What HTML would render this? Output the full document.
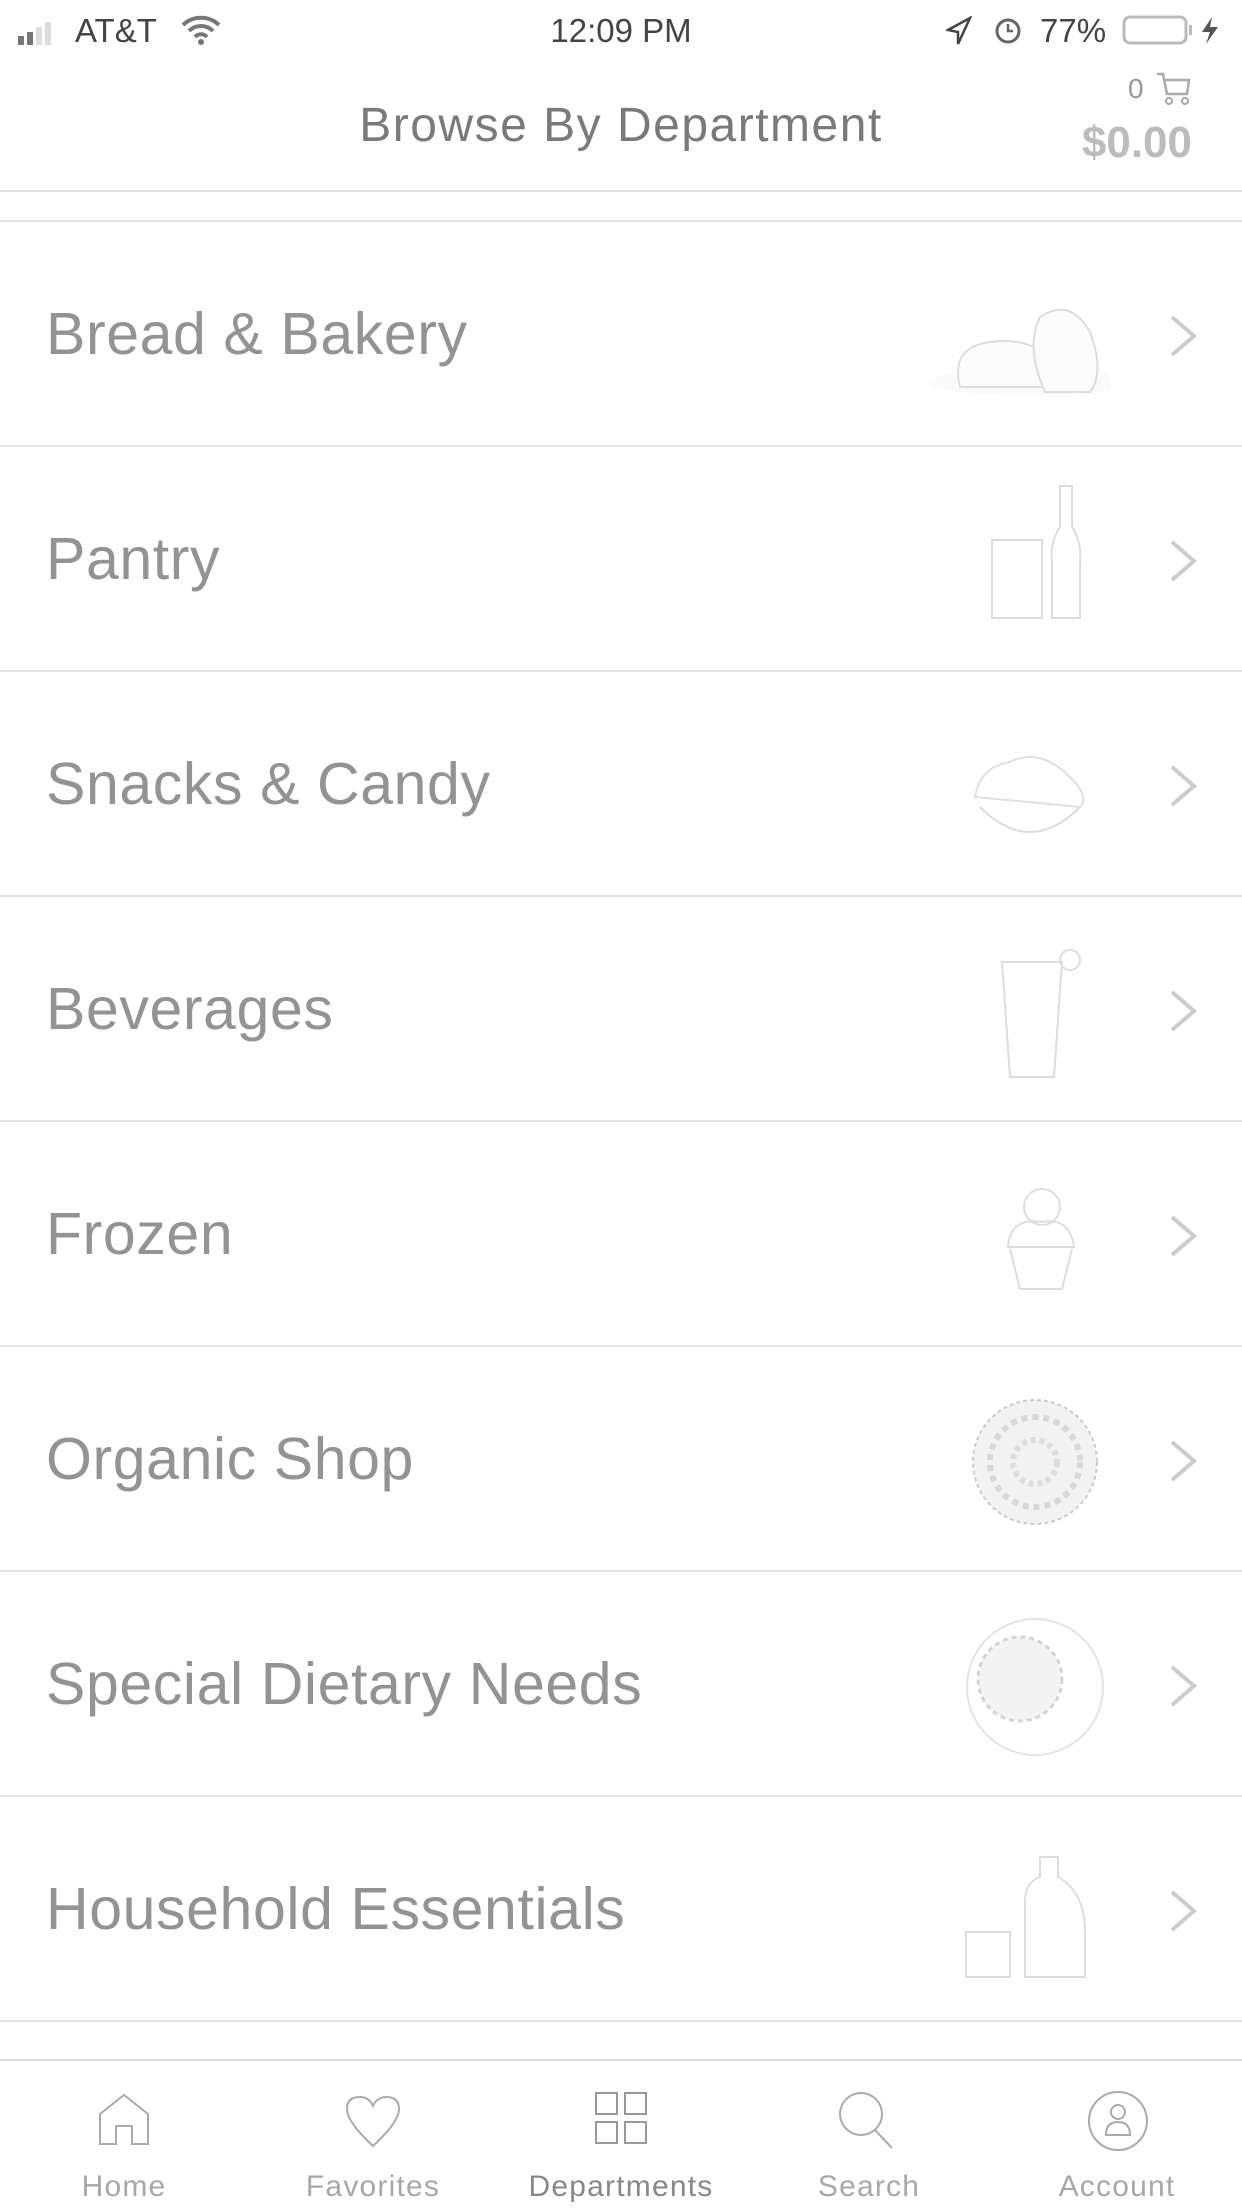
<!DOCTYPE html>
<html><head><meta charset="utf-8"><style>
*{margin:0;padding:0;box-sizing:border-box}
body{width:1242px;height:2208px;background:#fff;font-family:"Liberation Sans",sans-serif;position:relative;overflow:hidden}
.abs{position:absolute}
.row{position:absolute;left:0;width:1242px;height:225px;border-bottom:2px solid #e4e4e4}
.row .t{position:absolute;left:46px;top:0;line-height:225px;font-size:59px;color:#939393;letter-spacing:0.6px}
.row svg.ch{position:absolute;left:1168px;top:91px}
.row svg.im{position:absolute;left:930px;top:35px}
.tab{position:absolute;top:2060px;width:248px;text-align:center}
.tab .l{position:absolute;top:110px;width:100%;font-size:30px;color:#a8a8a8;letter-spacing:1.2px}
</style></head><body>
<div class="abs" style="left:18px;top:22px">
<svg width="48" height="24"><rect x="0" y="14" width="6" height="9" fill="#777"/><rect x="9" y="10" width="6" height="13" fill="#777"/><rect x="18" y="5" width="6" height="18" fill="#ddd"/><rect x="27" y="0" width="6" height="23" fill="#ddd"/></svg></div>
<div class="abs" style="left:75px;top:12px;font-size:33px;color:#444">AT&amp;T</div>
<svg class="abs" style="left:180px;top:14px" width="42" height="32" viewBox="0 0 42 32"><path d="M3 11 A26 26 0 0 1 39 11" stroke="#777" stroke-width="4" fill="none"/><path d="M9 17 A17 17 0 0 1 33 17" stroke="#777" stroke-width="4" fill="none"/><path d="M15 23 A8 8 0 0 1 27 23" stroke="#777" stroke-width="4" fill="none"/><circle cx="21" cy="28" r="3" fill="#777"/></svg>
<div class="abs" style="left:0;width:1242px;text-align:center;top:12px;font-size:33px;color:#444">12:09 PM</div>
<svg class="abs" style="left:946px;top:16px" width="26" height="30"><path d="M24 2 L2 14 L12 16 L12 28 Z" stroke="#444" stroke-width="2.5" fill="none"/></svg>
<svg class="abs" style="left:993px;top:14px" width="30" height="32"><circle cx="15" cy="17" r="11" stroke="#666" stroke-width="3" fill="none"/><path d="M15 10 V17 H20" stroke="#666" stroke-width="2.5" fill="none"/></svg>
<div class="abs" style="left:1040px;top:12px;font-size:33px;color:#444">77%</div>
<svg class="abs" style="left:1122px;top:14px" width="100" height="32"><rect x="2" y="3" width="62" height="26" rx="6" stroke="#bbb" stroke-width="3" fill="none"/><rect x="67" y="11" width="3" height="10" fill="#bbb"/><path d="M90 3 L80 18 H88 L84 30 L96 13 H88 Z" fill="#555"/></svg>
<div class="abs" style="left:0;width:1242px;text-align:center;top:98px;font-size:48px;color:#7a7a7a;letter-spacing:1.5px">Browse By Department</div>
<div class="abs" style="left:1128px;top:73px;font-size:28px;color:#999">0</div>
<svg class="abs" style="left:1155px;top:70px" width="38" height="38"><path d="M2 4 H8 L12 24 H32 L34 10 H10" stroke="#aaa" stroke-width="2.5" fill="none"/><circle cx="14" cy="31" r="3" stroke="#aaa" stroke-width="2" fill="none"/><circle cx="30" cy="31" r="3" stroke="#aaa" stroke-width="2" fill="none"/></svg>
<div class="abs" style="right:50px;top:118px;font-size:44px;color:#bcbcbc;font-weight:bold">$0.00</div>
<div class="abs" style="left:0;top:190px;width:1242px;height:2px;background:#e0e0e0"></div>
<div class="abs" style="left:0;top:220px;width:1242px;height:2px;background:#e4e4e4"></div>
<div class="row" style="top:222px"><div class="t">Bread &amp; Bakery</div>
<svg class="im" width="180" height="160"><ellipse cx="100" cy="125" rx="100" ry="14" fill="#fafafa"/><path d="M30 130 Q20 90 60 85 Q100 80 115 100 L120 130 Z" stroke="#ddd" stroke-width="2" fill="#fcfcfc"/><path d="M115 135 Q95 90 110 60 Q140 40 160 75 Q175 115 160 135 Z" stroke="#ddd" stroke-width="2" fill="#fcfcfc"/></svg>
<svg class="ch" width="32" height="46"><path d="M4 4 L26 23 L4 42" stroke="#ccc" stroke-width="4" fill="none"/></svg></div>
<div class="row" style="top:447px"><div class="t">Pantry</div>
<svg class="im" width="180" height="160"><rect x="62" y="58" width="50" height="78" stroke="#ddd" stroke-width="2" fill="none"/><path d="M130 4 H142 V45 Q152 60 150 80 V136 H122 V80 Q120 60 130 45 Z" stroke="#ddd" stroke-width="2" fill="none"/></svg>
<svg class="ch" width="32" height="46"><path d="M4 4 L26 23 L4 42" stroke="#ccc" stroke-width="4" fill="none"/></svg></div>
<div class="row" style="top:672px"><div class="t">Snacks &amp; Candy</div>
<svg class="im" width="180" height="160"><path d="M45 90 Q50 60 80 55 Q110 40 140 70 Q160 90 150 100 Z" stroke="#e0e0e0" stroke-width="2" fill="none"/><path d="M50 100 Q100 150 150 100" stroke="#ddd" stroke-width="2" fill="none"/></svg>
<svg class="ch" width="32" height="46"><path d="M4 4 L26 23 L4 42" stroke="#ccc" stroke-width="4" fill="none"/></svg></div>
<div class="row" style="top:897px"><div class="t">Beverages</div>
<svg class="im" width="180" height="160"><path d="M72 30 H132 L124 145 H80 Z" stroke="#ddd" stroke-width="2" fill="none"/><circle cx="140" cy="28" r="10" stroke="#ddd" stroke-width="2" fill="none"/></svg>
<svg class="ch" width="32" height="46"><path d="M4 4 L26 23 L4 42" stroke="#ccc" stroke-width="4" fill="none"/></svg></div>
<div class="row" style="top:1122px"><div class="t">Frozen</div>
<svg class="im" width="180" height="160"><circle cx="112" cy="50" r="18" stroke="#ddd" stroke-width="2" fill="none"/><path d="M78 90 Q80 60 112 65 Q140 60 144 90 Z" stroke="#ddd" stroke-width="2" fill="none"/><path d="M80 92 L90 132 H132 L142 92" stroke="#ddd" stroke-width="2" fill="none"/></svg>
<svg class="ch" width="32" height="46"><path d="M4 4 L26 23 L4 42" stroke="#ccc" stroke-width="4" fill="none"/></svg></div>
<div class="row" style="top:1347px"><div class="t">Organic Shop</div>
<svg class="im" width="180" height="160"><circle cx="105" cy="80" r="62" fill="#f2f2f2" stroke="#ccc" stroke-width="2" stroke-dasharray="4 3"/><circle cx="105" cy="80" r="45" fill="none" stroke="#d8d8d8" stroke-width="6" stroke-dasharray="6 5"/><circle cx="105" cy="80" r="22" fill="none" stroke="#ddd" stroke-width="6" stroke-dasharray="5 4"/></svg>
<svg class="ch" width="32" height="46"><path d="M4 4 L26 23 L4 42" stroke="#ccc" stroke-width="4" fill="none"/></svg></div>
<div class="row" style="top:1572px"><div class="t">Special Dietary Needs</div>
<svg class="im" width="180" height="160"><circle cx="105" cy="80" r="68" fill="none" stroke="#e4e4e4" stroke-width="2"/><circle cx="90" cy="72" r="42" fill="#f3f3f3" stroke="#d4d4d4" stroke-width="3" stroke-dasharray="5 4"/></svg>
<svg class="ch" width="32" height="46"><path d="M4 4 L26 23 L4 42" stroke="#ccc" stroke-width="4" fill="none"/></svg></div>
<div class="row" style="top:1797px"><div class="t">Household Essentials</div>
<svg class="im" width="180" height="160"><path d="M36 100 H80 V145 H36 Z" stroke="#ddd" stroke-width="2" fill="none"/><path d="M110 25 H128 V45 Q155 60 155 100 V145 H95 V70 Q95 50 110 45 Z" stroke="#ddd" stroke-width="2" fill="none"/></svg>
<svg class="ch" width="32" height="46"><path d="M4 4 L26 23 L4 42" stroke="#ccc" stroke-width="4" fill="none"/></svg></div>
<div class="abs" style="left:0;top:2059px;width:1242px;height:149px;background:#fff;border-top:2px solid #ddd"></div>
<div class="tab" style="left:0"><svg style="position:absolute;left:96px;top:32px" width="56" height="56"><path d="M4 52 V22 L28 3 L52 22 V52 H36 V34 H20 V52 Z" stroke="#aaa" stroke-width="2" fill="none"/></svg><div class="l">Home</div></div>
<div class="tab" style="left:249px"><svg style="position:absolute;left:94px;top:34px" width="60" height="54"><path d="M30 52 Q4 28 4 15 Q4 3 17 3 Q26 3 30 12 Q34 3 43 3 Q56 3 56 15 Q56 28 30 52 Z" stroke="#aaa" stroke-width="2" fill="none"/></svg><div class="l">Favorites</div></div>
<div class="tab" style="left:497px"><svg style="position:absolute;left:97px;top:31px" width="56" height="56"><rect x="2" y="2" width="21" height="21" stroke="#999" stroke-width="2" fill="none"/><rect x="31" y="2" width="21" height="21" stroke="#999" stroke-width="2" fill="none"/><rect x="2" y="31" width="21" height="21" stroke="#999" stroke-width="2" fill="none"/><rect x="31" y="31" width="21" height="21" stroke="#999" stroke-width="2" fill="none"/></svg><div class="l" style="color:#888">Departments</div></div>
<div class="tab" style="left:745px"><svg style="position:absolute;left:92px;top:30px" width="60" height="60"><circle cx="24" cy="24" r="21" stroke="#aaa" stroke-width="2" fill="none"/><path d="M38 40 L55 58" stroke="#aaa" stroke-width="2"/></svg><div class="l">Search</div></div>
<div class="tab" style="left:993px"><svg style="position:absolute;left:94px;top:30px" width="62" height="62"><circle cx="31" cy="31" r="29" stroke="#aaa" stroke-width="2" fill="none"/><circle cx="31" cy="22" r="7" stroke="#aaa" stroke-width="2" fill="none"/><path d="M19 45 Q19 32 31 32 Q43 32 43 45 Z" stroke="#aaa" stroke-width="2" fill="none"/></svg><div class="l">Account</div></div>
</body></html>
